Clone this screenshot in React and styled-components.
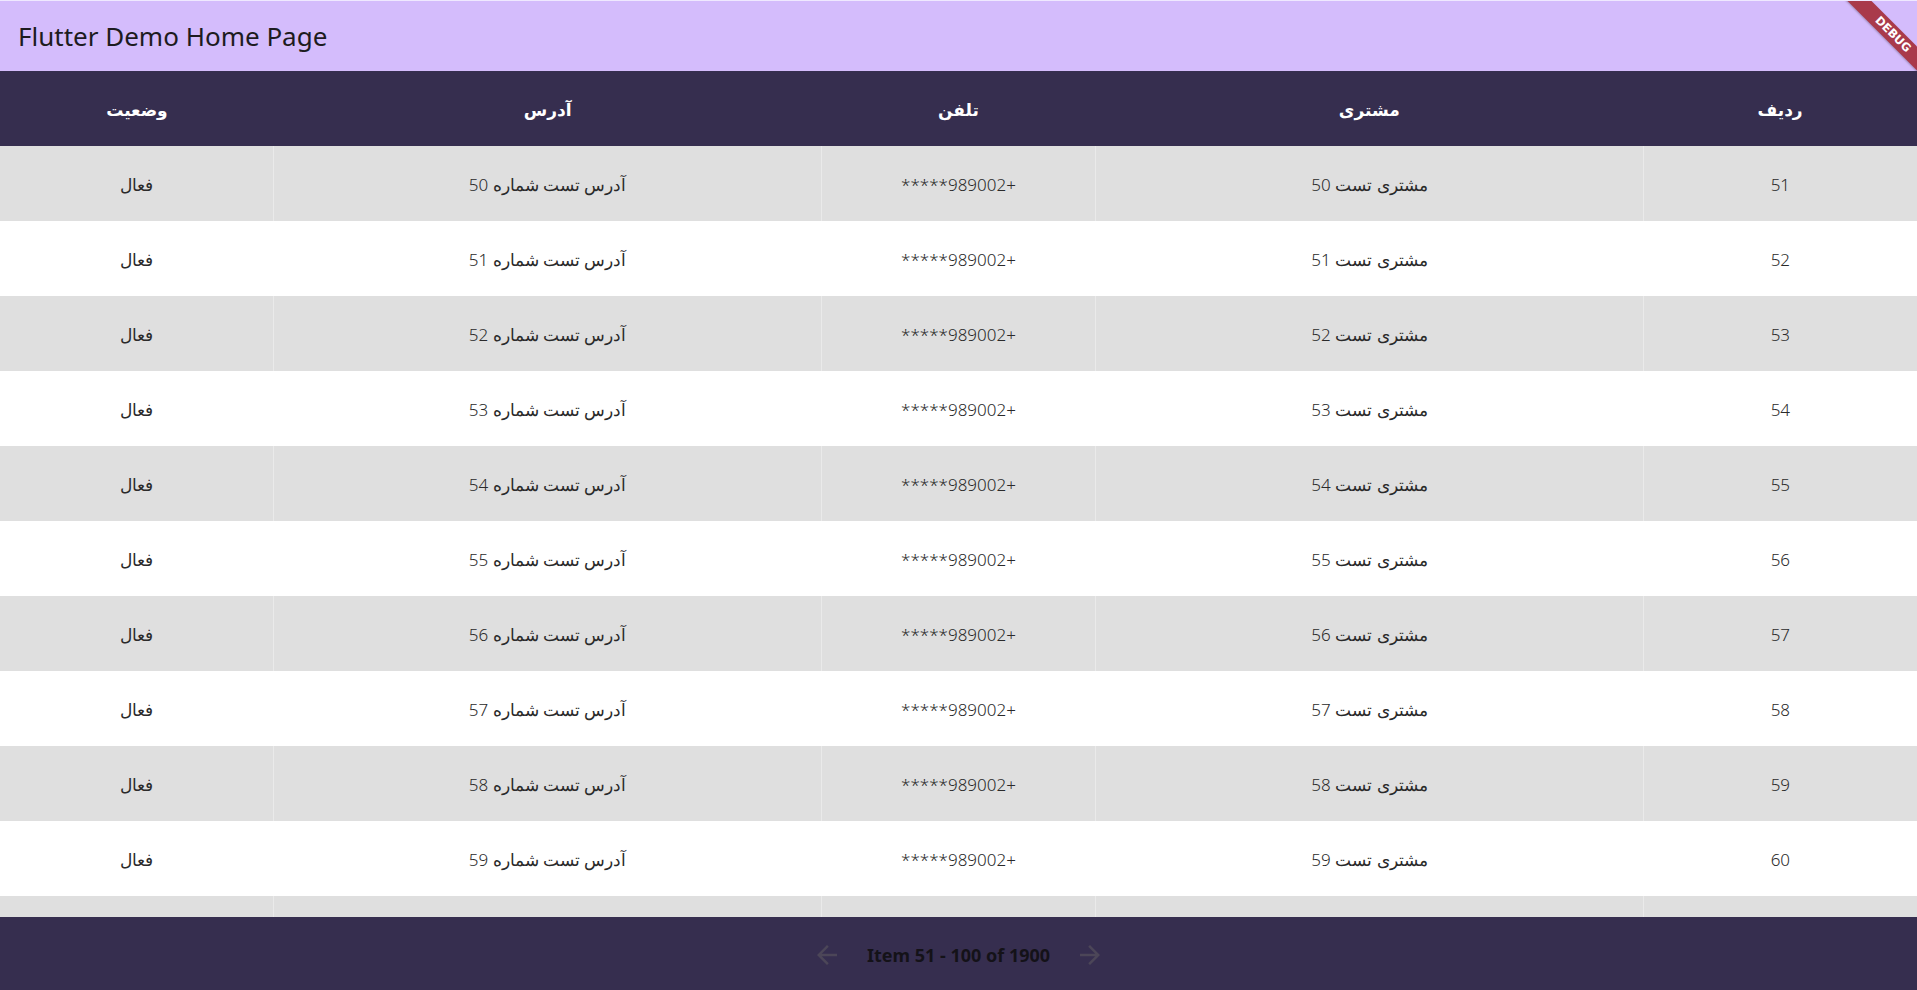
import React from "react";
import styled, { createGlobalStyle } from "styled-components";

const GlobalStyle = createGlobalStyle`
  html, body, #root {
    margin: 0;
    padding: 0;
    height: 100%;
  }
  body {
    font-family: "Segoe UI", "Noto Sans", "DejaVu Sans", sans-serif;
    overflow: hidden;
  }
`;

// ستون‌ها از راست به چپ
const columns = [
  { key: "row", title: "ردیف", flex: 1 },
  { key: "customer", title: "مشتری", flex: 2 },
  { key: "phone", title: "تلفن", flex: 1 },
  { key: "address", title: "آدرس", flex: 2 },
  { key: "status", title: "وضعیت", flex: 1 },
];

const rows = Array.from({ length: 10 }, (_, i) => ({
  row: String(51 + i),
  customer: `مشتری تست ${50 + i}`,
  phone: "+989002*****",
  address: `آدرس تست شماره ${50 + i}`,
  status: "فعال",
}));

function ArrowIcon({ flip }) {
  return (
    <svg
      width="30"
      height="30"
      viewBox="0 0 24 24"
      style={flip ? { transform: "scaleX(-1)" } : undefined}
    >
      <path
        fill="currentColor"
        d="M20 11H7.83l5.59-5.59L12 4l-8 8 8 8 1.41-1.41L7.83 13H20v-2z"
      />
    </svg>
  );
}

function App() {
  return (
    <Page>
      <GlobalStyle />
      <AppBar>
        <Title>Flutter Demo Home Page</Title>
        <BannerCorner>
          <Banner>DEBUG</Banner>
        </BannerCorner>
      </AppBar>

      <HeaderRow>
        {columns.map((c) => (
          <HeadCell key={c.key} $flex={c.flex}>
            {c.title}
          </HeadCell>
        ))}
      </HeaderRow>

      <Body>
        {rows.map((r, i) => (
          <Row key={r.row} $odd={i % 2 === 0}>
            {columns.map((c) => (
              <Cell key={c.key} $flex={c.flex}>
                {r[c.key]}
              </Cell>
            ))}
          </Row>
        ))}
        {/* ردیف بعدی که فقط لبه‌اش دیده می‌شود */}
        <Row $odd>
          {columns.map((c) => (
            <Cell key={c.key} $flex={c.flex} />
          ))}
        </Row>
      </Body>

      <Footer>
        <NavButton>
          <ArrowIcon />
        </NavButton>
        <PageInfo>Item 51 - 100 of 1900</PageInfo>
        <NavButton>
          <ArrowIcon flip />
        </NavButton>
      </Footer>
    </Page>
  );
}

const Page = styled.div`
  height: 100vh;
  display: flex;
  flex-direction: column;
  background: #fff;
`;

const AppBar = styled.header`
  position: relative;
  height: 70px;
  flex-shrink: 0;
  border-top: 1px solid #efe8ff;
  background-color: #d4bcfc;
  display: flex;
  align-items: center;
  padding-left: 18px;
  overflow: hidden;
`;

const Title = styled.h1`
  margin: 0;
  font-size: 26px;
  font-weight: 400;
  color: #1d1b20;
  letter-spacing: 0;
`;

const BannerCorner = styled.div`
  position: absolute;
  top: 0;
  right: 0;
  width: 80px;
  height: 80px;
  overflow: hidden;
  pointer-events: none;
`;

const Banner = styled.div`
  position: absolute;
  left: -4px;
  top: 20px;
  width: 110px;
  height: 17px;
  transform: rotate(45deg);
  background-color: #a93a4b;
  box-shadow: 0 1px 2px rgba(0, 0, 0, 0.25);
  color: #fff;
  font-family: "DejaVu Sans", sans-serif;
  font-size: 11.5px;
  font-weight: 700;
  line-height: 17px;
  text-align: center;
  padding-left: 14px;
  box-sizing: border-box;
`;

const HeaderRow = styled.div`
  direction: rtl;
  display: flex;
  height: 75px;
  flex-shrink: 0;
  background-color: #362e4f;
`;

const HeadCell = styled.div`
  flex: ${(p) => p.$flex};
  display: flex;
  align-items: center;
  justify-content: center;
  color: #fff;
  font-size: 17px;
  font-weight: 700;
  padding-top: 2px;
`;

const Body = styled.div`
  direction: rtl;
  flex: 1;
  overflow: hidden;
`;

const Row = styled.div`
  display: flex;
  height: 75px;
  background-color: ${(p) => (p.$odd ? "#dfdfdf" : "#ffffff")};
`;

const Cell = styled.div`
  flex: ${(p) => p.$flex};
  display: flex;
  align-items: center;
  justify-content: center;
  padding-top: 2px;
  color: #2a2a2a;
  font-size: 17px;
  font-weight: 300;
  border-left: 1px solid rgba(255, 255, 255, 0.35);

  &:last-child {
    border-left: none;
  }
`;

const Footer = styled.footer`
  height: 73px;
  flex-shrink: 0;
  background-color: #362e4f;
  display: flex;
  align-items: center;
  justify-content: center;
  gap: 25px;
`;

const NavButton = styled.div`
  display: flex;
  align-items: center;
  justify-content: center;
  padding-top: 3px;
  color: #4c4658;
`;

const PageInfo = styled.span`
  color: #141218;
  font-size: 18px;
  font-weight: 700;
  padding-top: 3px;
`;

export default App;
